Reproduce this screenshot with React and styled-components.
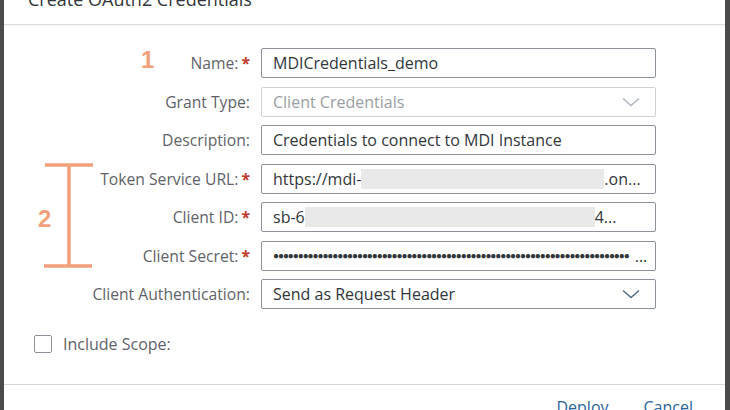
import React from "react";
import styled, { createGlobalStyle } from "styled-components";

const Global = createGlobalStyle`
  html, body { margin: 0; padding: 0; background: #4b4b4b; }
  body { font-family: "Open Sans", "Liberation Sans", Arial, sans-serif; }
  * { box-sizing: border-box; }
`;

const Page = styled.div`
  display: flex;
  width: 730px;
  height: 410px;
  overflow: hidden;
  background: #4b4b4b;
`;

const Dialog = styled.div`
  position: relative;
  margin-left: 4px;
  width: 721px;
  height: 410px;
  background: #ffffff;
  display: flex;
  flex-direction: column;
`;

const Header = styled.div`
  height: 25px;
  padding-left: 24px;
  border-bottom: 1px solid #dcdcdc;
  box-shadow: 0 1px 2px rgba(0, 0, 0, 0.06);
  overflow: hidden;
`;

const Title = styled.h1`
  margin: -12px 0 0;
  font-size: 18px;
  line-height: 22px;
  font-weight: normal;
  color: #32363a;
`;

const Body = styled.div`
  flex: 1;
  padding: 23px 0 0 0;
  display: flex;
  flex-direction: column;
`;

const Form = styled.div`
  display: grid;
  grid-template-columns: 246px 395px;
  column-gap: 11px;
  row-gap: 8.5px;
`;

const Label = styled.div`
  height: 30px;
  display: flex;
  align-items: center;
  justify-content: flex-end;
  font-size: 15.7px;
  color: #5f6369;
  white-space: nowrap;
`;

const Req = styled.span`
  color: #c0392b;
  margin-left: 3px;
  font-weight: bold;
`;

const Field = styled.div`
  height: 30px;
  display: flex;
  align-items: center;
  padding: 0 11px;
  border: 1px solid ${(p) => (p.$disabled ? "#cfd3d6" : "#8c9299")};
  border-radius: 2px;
  background: #fff;
  font-size: 16px;
  color: ${(p) => (p.$disabled ? "#9a9ea3" : "#32363a")};
  white-space: nowrap;
  overflow: hidden;
`;

const Grow = styled.span`
  flex: 1;
  overflow: hidden;
  text-overflow: ellipsis;
`;

const Mask = styled.span`
  display: inline-block;
  width: ${(p) => p.$w}px;
  height: 20px;
  background: #e9e9ea;
  vertical-align: middle;
`;

const Dots = styled.span`
  white-space: nowrap;
  font-family: "Liberation Sans", Arial, sans-serif;
  font-size: 10px;
  letter-spacing: -1.1px;
  color: #32363a;
`;

const Ellip = styled.span`
  font-size: 16px;
  margin-left: 6px;
`;

const Chevron = ({ color }) => (
  <svg width="18" height="10" viewBox="0 0 18 10" style={{ marginRight: 4 }}>
    <polyline points="1,1.5 9,8.5 17,1.5" fill="none" stroke={color} strokeWidth="1.4" />
  </svg>
);

const CheckRow = styled.div`
  display: flex;
  align-items: center;
  gap: 11px;
  margin: 24px 0 0 30px;
  font-size: 16px;
  color: #5f6369;
`;

const Box = styled.span`
  width: 18px;
  height: 18px;
  border: 1px solid #8c9299;
  border-radius: 2px;
  background: #fff;
`;

const Footer = styled.div`
  margin-top: auto;
  height: 26px;
  border-top: 1px solid #d9d9d9;
  display: flex;
  justify-content: flex-end;
  align-items: flex-start;
  gap: 35px;
  padding: 11px 32px 0 0;
`;

const Btn = styled.span`
  font-size: 16px;
  color: #2c6399;
`;

const Num = styled.div`
  position: absolute;
  left: ${(p) => p.$x}px;
  top: ${(p) => p.$y}px;
  font-family: "Liberation Sans", Arial, sans-serif;
  font-size: 24px;
  font-weight: bold;
  color: #f2a07b;
`;

const Bracket = styled.svg`
  position: absolute;
  left: 38px;
  top: 162px;
`;

const rows = [
  { label: "Name:", req: true, content: <Grow>MDICredentials_demo</Grow> },
  {
    label: "Grant Type:",
    disabled: true,
    content: (
      <>
        <Grow>Client Credentials</Grow>
        <Chevron color="#aab5c0" />
      </>
    ),
  },
  { label: "Description:", content: <Grow>Credentials to connect to MDI Instance</Grow> },
  {
    label: "Token Service URL:",
    req: true,
    content: (
      <>
        <span>https://mdi-</span>
        <Mask $w={243} />
        <span>.on...</span>
      </>
    ),
  },
  {
    label: "Client ID:",
    req: true,
    content: (
      <>
        <span>sb-6</span>
        <Mask $w={290} />
        <span>4...</span>
      </>
    ),
  },
  {
    label: "Client Secret:",
    req: true,
    content: (
      <>
        <Dots>{"●".repeat(72)}</Dots>
        <Ellip>...</Ellip>
      </>
    ),
  },
  {
    label: "Client Authentication:",
    content: (
      <>
        <Grow>Send as Request Header</Grow>
        <Chevron color="#4f6d8a" />
      </>
    ),
  },
];

export default function App() {
  return (
    <>
      <Global />
      <Page>
        <Dialog>
          <Header>
            <Title>Create OAuth2 Credentials</Title>
          </Header>
          <Body>
            <Form>
              {rows.map((r) => (
                <React.Fragment key={r.label}>
                  <Label>
                    {r.label}
                    {r.req && <Req>*</Req>}
                  </Label>
                  <Field $disabled={r.disabled}>{r.content}</Field>
                </React.Fragment>
              ))}
            </Form>
            <CheckRow>
              <Box />
              <span>Include Scope:</span>
            </CheckRow>
            <Footer>
              <Btn>Deploy</Btn>
              <Btn>Cancel</Btn>
            </Footer>
          </Body>
          <Num $x={137} $y={46}>1</Num>
          <Num $x={34} $y={205}>2</Num>
          <Bracket width="60" height="108" viewBox="0 0 60 108">
            <g stroke="#f2a07b" strokeWidth="3.5" fill="none">
              <line x1="3" y1="3" x2="51" y2="3" />
              <line x1="27" y1="3" x2="27" y2="104" />
              <line x1="2" y1="104" x2="50" y2="104" />
            </g>
          </Bracket>
        </Dialog>
      </Page>
    </>
  );
}
